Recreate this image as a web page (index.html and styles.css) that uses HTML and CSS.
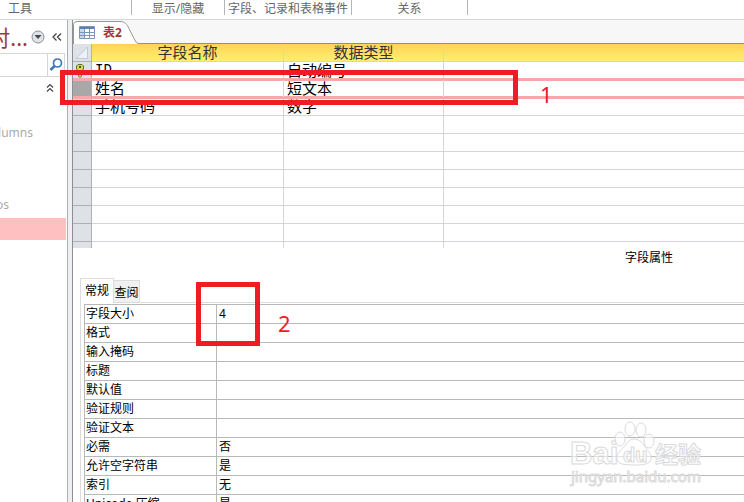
FILE: index.html
```html
<!DOCTYPE html>
<html lang="zh-CN">
<head>
    <meta charset="UTF-8">
    <meta name="viewport" content="width=device-width, initial-scale=1.0">
    <title>表2</title>
    <link rel="stylesheet" href="styles.css">
</head>
<body>
    <div class="ribbon">
        <span class="group tools">工具</span>
        <span class="group show">显示/隐藏</span>
        <span class="group events">字段、记录和表格事件</span>
        <span class="group relations">关系</span>
    </div>

    <div class="workspace">
        <nav class="nav">
            <div class="nav-head">
                <span class="nav-title">对...</span>
                <button class="icon-btn" aria-label="菜单">
                    <svg width="14" height="14" viewBox="0 0 14 14">
                        <circle cx="7" cy="7" r="6" fill="#dfe2e6" stroke="#8a8f98"/>
                        <path d="M3.500 5h7L7 9z" fill="#45464f"/>
                    </svg>
                </button>
                <button class="icon-btn" aria-label="折叠">
                    <svg width="10" height="10" viewBox="0 0 10 10" fill="none" stroke="#444" stroke-width="1.300">
                        <path d="M4.500 1.500 1 5l3.500 3.500M9 1.500 5.500 5 9 8.500"/>
                    </svg>
                </button>
            </div>
            <div class="search">
                <input type="text" aria-label="搜索">
                <button class="icon-btn" aria-label="搜索按钮">
                    <svg width="14" height="14" viewBox="0 0 14 14" fill="none" stroke="#3f78b5">
                        <circle cx="8.500" cy="5" r="4" stroke-width="1.700"/>
                        <path d="M5.500 8 1.500 12" stroke-width="2.700"/>
                    </svg>
                </button>
            </div>
            <div class="nav-group">
                <button class="icon-btn" aria-label="收起">
                    <svg width="8" height="10" viewBox="0 0 8 10" fill="none" stroke="#444" stroke-width="1.200">
                        <path d="M1 4.500 4 1.500l3 3M1 8.500l3-3 3 3"/>
                    </svg>
                </button>
            </div>
            <div class="nav-item columns">lumns</div>
            <div class="nav-item groups">os</div>
            <div class="nav-item selected"></div>
        </nav>

        <main class="document">
            <div class="doc-tabs">
                <button class="doc-tab">
                    <svg class="tab-shape" width="66" height="24" viewBox="0 0 66 24">
                        <path d="M.5 24V5Q.5 1.500 5 1.500h42c5 0 7 3 9 7l5 10q2 5 5 5.500" fill="#fff" stroke="#9a948e"/>
                    </svg>
                    <svg class="tab-icon" width="16" height="13" viewBox="0 0 16 13">
                        <path d="M.5.5h15v12H.5z" fill="#fff" stroke="#7d94b8"/>
                        <path d="M1 1h14v2H1z" fill="#5f80b5"/>
                        <path d="M1 3h4v9H1z" fill="#c8d8ee"/>
                        <path d="M1 6.500h14M1 9.500h14M5.500 3v9M10.500 3v9" stroke="#7d94b8" fill="none"/>
                    </svg>
                    <span class="tab-name">表2</span>
                </button>
            </div>

            <table class="fields">
                <thead>
                    <tr>
                        <th class="selector">
                            <svg width="12" height="12" viewBox="0 0 12 12"><path d="M11.500 0v11.500H0z" fill="#eef1f5" stroke="#c3c9d3"/></svg>
                        </th>
                        <th class="name">字段名称</th>
                        <th class="type">数据类型</th>
                        <th></th>
                    </tr>
                </thead>
                <tbody>
                    <tr>
                        <td class="selector key">
                            <svg width="8" height="14" viewBox="0 0 8 14">
                                <path d="M2 .5h4L7.500 2v3L5.500 7v5L4 13.500 2.500 12V7L.5 5V2z" fill="#d3d95c" stroke="#66702a"/>
                                <path d="M3 2h2v2H3z" fill="#4a5020"/>
                            </svg>
                        </td>
                        <td class="mono">ID</td><td>自动编号</td><td></td>
                    </tr>
                    <tr class="current"><td class="selector"></td><td>姓名</td><td>短文本</td><td></td></tr>
                    <tr><td class="selector"></td><td>手机号码</td><td>数字</td><td></td></tr>
                    <tr><td class="selector"></td><td></td><td></td><td></td></tr>
                    <tr><td class="selector"></td><td></td><td></td><td></td></tr>
                    <tr><td class="selector"></td><td></td><td></td><td></td></tr>
                    <tr><td class="selector"></td><td></td><td></td><td></td></tr>
                    <tr><td class="selector"></td><td></td><td></td><td></td></tr>
                    <tr><td class="selector"></td><td></td><td></td><td></td></tr>
                    <tr><td class="selector"></td><td></td><td></td><td></td></tr>
                    <tr class="last"><td class="selector"></td><td></td><td></td><td></td></tr>
                </tbody>
            </table>

            <h2 class="caption">字段属性</h2>

            <div class="prop-tabs">
                <button class="prop-tab active">常规</button>
                <button class="prop-tab">查阅</button>
            </div>
            <div class="prop-panel">
                <table class="props">
                    <tr><th><label for="size">字段大小</label></th><td><input id="size" type="text" value="4"></td></tr>
                    <tr><th><label for="format">格式</label></th><td><input id="format" type="text"></td></tr>
                    <tr><th><label for="mask">输入掩码</label></th><td><input id="mask" type="text"></td></tr>
                    <tr><th><label for="title">标题</label></th><td><input id="title" type="text"></td></tr>
                    <tr><th><label for="default">默认值</label></th><td><input id="default" type="text"></td></tr>
                    <tr><th><label for="rule">验证规则</label></th><td><input id="rule" type="text"></td></tr>
                    <tr><th><label for="ruletext">验证文本</label></th><td><input id="ruletext" type="text"></td></tr>
                    <tr><th><label for="required">必需</label></th><td><input id="required" type="text" value="否"></td></tr>
                    <tr><th><label for="empty">允许空字符串</label></th><td><input id="empty" type="text" value="是"></td></tr>
                    <tr><th><label for="index">索引</label></th><td><input id="index" type="text" value="无"></td></tr>
                    <tr><th><label for="unicode">Unicode 压缩</label></th><td><input id="unicode" type="text" value="是"></td></tr>
                </table>
            </div>
        </main>
    </div>

    <!-- red step marks -->
    <div class="mark mark-row"></div>
    <div class="step step-one">1</div>
    <div class="mark mark-size"></div>
    <div class="step step-two">2</div>

    <svg class="watermark" width="140" height="68" viewBox="0 0 140 68">
        <g fill="#fff" fill-opacity="0.6" stroke="#dadada" stroke-width="1">
            <text x="4" y="44" class="wm-logo">Bai</text>
            <ellipse cx="54" cy="19" rx="5" ry="7"/>
            <ellipse cx="64" cy="9" rx="5" ry="7"/>
            <ellipse cx="75" cy="10" rx="5" ry="7"/>
            <ellipse cx="83" cy="21" rx="5" ry="7"/>
            <path d="M68 19c6 0 9 5 12 9s6 7 5 11c-1 5-6 6-17 6s-16-1-17-6c-1-4 2-7 6-11s5-9 11-9z"/>
            <text x="57" y="42" class="wm-du">du</text>
            <text x="89" y="43" class="wm-cn">经验</text>
            <text x="5" y="62" class="wm-url">jingyan.baidu.com</text>
        </g>
    </svg>
</body>
</html>
```

FILE: styles.css
```css
* {
    box-sizing: border-box;
}
html, body {
    margin: 0;
    height: 100%;
    overflow: hidden;
    background: #fff;
    font-family: "Noto Sans", "Noto Sans CJK SC", sans-serif;
    font-size: 12px;
    color: #000;
}
body {
    position: relative;
    display: flex;
    flex-direction: column;
}
button, input {
    font: inherit;
    color: inherit;
    border: 0;
    padding: 0;
    margin: 0;
    background: none;
}

/* Ribbon group names */
.ribbon {
    display: flex;
    align-items: flex-start;
    flex: none;
    height: 20px;
    border-bottom: 1px solid #d5d6d8;
}
.group {
    height: 15px;
    line-height: 18px;
    border-right: 1px solid #b5b5b5;
    color: #666;
    text-align: center;
    white-space: nowrap;
}
.tools {
    width: 132px;
    padding-left: 8px;
    text-align: left;
}
.show {
    width: 93px;
}
.events {
    width: 127px;
}
.relations {
    width: 116px;
}

.workspace {
    display: flex;
    flex: 1;
    min-height: 0;
}

/* Navigation pane */
.nav {
    flex: none;
    width: 67px;
    overflow: hidden;
}
.icon-btn {
    display: flex;
    align-items: center;
    justify-content: center;
}
.nav-head {
    display: flex;
    align-items: center;
    justify-content: flex-end;
    gap: 7px;
    height: 33px;
    padding-right: 5px;
}
.nav-title {
    margin-right: -4px;
    font-size: 22px;
    line-height: 32px;
    color: #a4373a;
}
.search {
    display: flex;
    height: 24px;
    margin-right: 2px;
    border: 1px solid #d5d6d8;
    border-left: 0;
}
.search input {
    width: 47px;
}
.search button {
    flex: 1;
    border-left: 1px solid #d5d6d8;
}
.nav-group {
    display: flex;
    justify-content: flex-end;
    height: 46px;
    padding: 6px 13px;
    align-items: flex-start;
}
.nav-item {
    height: 20px;
    line-height: 20px;
    color: #aaa;
}
.columns {
    width: 33px;
    direction: rtl;
    margin-bottom: 52px;
}
.groups {
    width: 9px;
    direction: rtl;
    margin-bottom: 3px;
}
.selected {
    height: 22px;
    margin-right: 1px;
    background: #ffc0c2;
}

/* Document area, the left border is the splitter */
.document {
    flex: 1;
    min-width: 0;
    overflow: hidden;
    border-left: 1px solid #8b9097;
    margin-left: 5px;
    box-shadow: -4px 0 0 #eff0f2, -5px 0 0 #aeb0b4;
}
.doc-tabs {
    height: 24px;
    background: #f7f7f7;
    border-bottom: 1px solid #8b9097;
}
.doc-tab {
    display: flex;
    align-items: center;
    position: relative;
    gap: 8px;
    height: 24px;
    padding-left: 6px;
}
.tab-shape {
    position: absolute;
    left: 0;
    top: 0;
}
.tab-icon, .tab-name {
    position: relative;
}
.tab-name {
    font-weight: bold;
    color: #a4373a;
}

/* Field list */
.fields, .props {
    width: 100%;
    table-layout: fixed;
    border-collapse: separate;
    border-spacing: 0;
}
.fields th, .fields td {
    height: 18px;
    padding: 0 0 0 3px;
    border-right: 1px solid #d0d5e0;
    border-bottom: 1px solid #d0d5e0;
    font-size: 15px;
    line-height: 17px;
    font-weight: normal;
    text-align: left;
    white-space: nowrap;
}
.fields th {
    padding: 0;
    background: linear-gradient(#ffd457, #ffee70);
    color: #333;
    text-align: center;
}
.fields th:last-child, .fields td:last-child {
    border-right: 0;
}
.fields .selector {
    width: 19px;
    padding: 0;
    background: #dee1e6;
    border-color: #aeb0b4;
    text-align: center;
}
.fields .selector svg {
    display: block;
    margin: 0 auto;
}
.fields .key svg {
    margin-left: 3px;
}
.fields .name {
    width: 192px;
}
.fields .type {
    width: 160px;
}
.fields .mono {
    font-family: "Liberation Mono", monospace;
    font-size: 14px;
}
/* pink bands run over the text of the rows above and below */
.fields .current td {
    position: relative;
    box-shadow: inset 0 -1px #f7a6aa, inset 0 1px #f7a6aa, 0 -2px #f7a6aa, 0 1px #f7a6aa;
    border-bottom-color: #f7a6aa;
}
.fields .current .selector {
    background: #a8a8a8;
}
.fields .last td {
    height: 6px;
    border-bottom: 0;
}

.caption {
    margin: 0;
    padding: 0 71px 0 0;
    height: 30px;
    line-height: 20px;
    font-size: 12px;
    font-weight: normal;
    text-align: right;
}

/* Field properties */
.prop-tabs {
    display: flex;
    align-items: flex-end;
    height: 24px;
    margin-left: 7px;
}
.prop-tab {
    width: 26px;
    height: 22px;
    border: 1px solid #dcdcdc;
    border-width: 1px 1px 0 0;
    background: #f0f0f0;
    white-space: nowrap;
}
.prop-tab.active {
    width: 34px;
    height: 25px;
    border-width: 1px 1px 0 1px;
    background: #fff;
    margin-bottom: -1px;
    padding-bottom: 3px;
    position: relative;
}
.prop-panel {
    margin-left: 7px;
    padding: 1px 0 0 3px;
    border: 1px solid #dcdcdc;
    border-width: 1px 0 0 1px;
}
.props {
    border-top: 1px solid #b9b9b9;
    border-left: 1px solid #b9b9b9;
}
.props th, .props td {
    height: 19px;
    padding: 0 0 0 1px;
    border-bottom: 1px solid #b9b9b9;
    line-height: 18px;
    font-weight: normal;
    text-align: left;
}
.props th {
    width: 132px;
    border-right: 1px solid #b9b9b9;
}
.props td {
    padding-left: 2px;
}
.props label, .props input {
    display: block;
    width: 100%;
    height: 18px;
}

/* Step marks lie over the window */
.mark {
    position: absolute;
    border: 5px solid #ee1c24;
}
.mark-row {
    left: 60px;
    top: 70px;
    width: 458px;
    height: 35px;
}
.mark-size {
    left: 196px;
    top: 282px;
    width: 64px;
    height: 64px;
}
.step {
    position: absolute;
    font-size: 22px;
    line-height: 24px;
    color: #ee1c24;
}
.step-one {
    left: 540px;
    top: 82px;
}
.step-two {
    left: 278px;
    top: 311px;
}

.watermark {
    position: absolute;
    right: 38px;
    bottom: 14px;
}
.wm-logo {
    font: bold 31px "Liberation Sans", sans-serif;
}
.wm-du {
    font: bold 20px "Liberation Sans", sans-serif;
}
.wm-cn {
    font: bold 23px "Noto Sans CJK SC", sans-serif;
}
.wm-url {
    font: 15px "Noto Sans", sans-serif;
}
```
